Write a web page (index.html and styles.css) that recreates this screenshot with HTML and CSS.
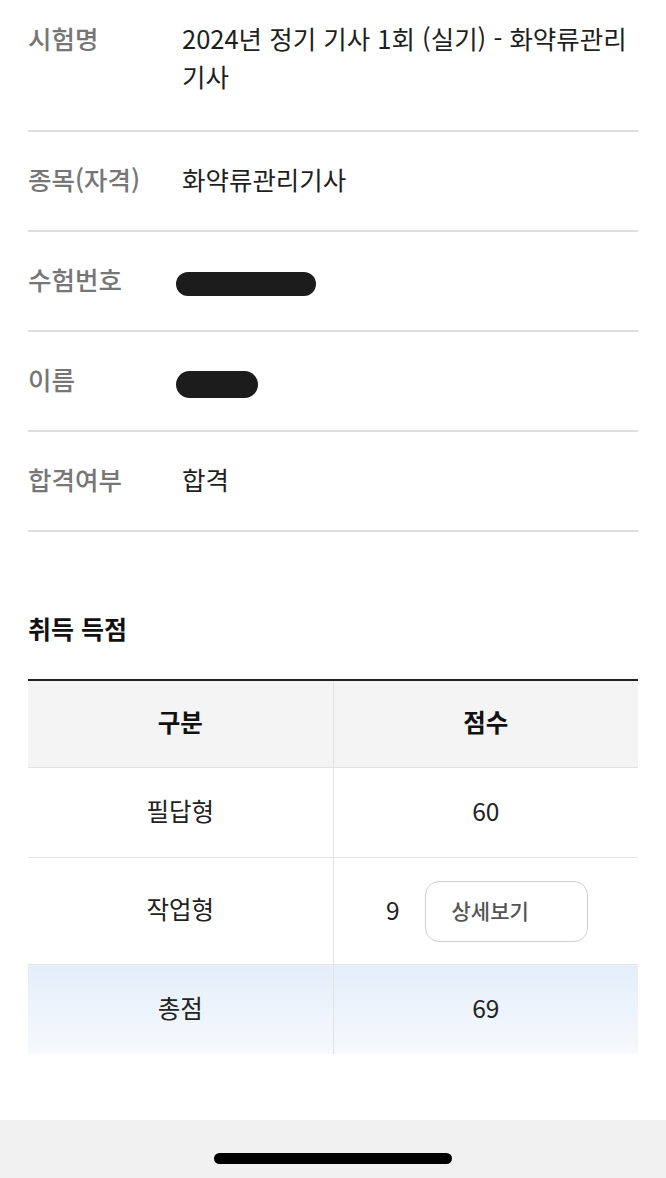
FILE: index.html
```html
<!DOCTYPE html>
<html lang="ko">
  <head>
    <meta charset="UTF-8" />
    <meta name="viewport" content="width=device-width, initial-scale=1.0" />
    <title>합격 조회</title>
    <link rel="stylesheet" href="styles.css">
  </head>
  <body>
    <div class="page">
      <dl class="info">
        <div class="info-row">
          <dt>시험명</dt>
          <dd>2024년 정기 기사 1회 (실기) - 화약류관리기사</dd>
        </div>
        <div class="info-row">
          <dt>종목(자격)</dt>
          <dd>화약류관리기사</dd>
        </div>
        <div class="info-row">
          <dt>수험번호</dt>
          <dd><span class="masked masked-long"></span></dd>
        </div>
        <div class="info-row">
          <dt>이름</dt>
          <dd><span class="masked masked-short"></span></dd>
        </div>
        <div class="info-row">
          <dt>합격여부</dt>
          <dd>합격</dd>
        </div>
      </dl>

      <h2 class="section-title">취득 득점</h2>

      <table class="score">
        <thead>
          <tr>
            <th>구분</th>
            <th>점수</th>
          </tr>
        </thead>
        <tbody>
          <tr>
            <td>필답형</td>
            <td>60</td>
          </tr>
          <tr class="work-row">
            <td>작업형</td>
            <td class="detail-cell">
              <div class="score-detail">
                <span>9</span>
                <button class="detail-btn">상세보기</button>
              </div>
            </td>
          </tr>
          <tr class="total">
            <td>총점</td>
            <td>69</td>
          </tr>
        </tbody>
      </table>
    </div>

    <div class="home-bar">
      <div class="home-indicator"></div>
    </div>
  </body>
</html>
```

FILE: styles.css
```css
body {
  font-family: "Noto Sans CJK KR", "Noto Sans", sans-serif;
  background: #fff;
  color: #222;
  margin: 0;
  padding: 0;
}
.page {
  padding: 0 28px;
  height: 1120px;
}
.info {
  margin: 0;
}
.info-row {
  display: flex;
  padding: 28px 0 32px;
  border-bottom: 2px solid #dedede;
  font-size: 25.5px;
  line-height: 38px;
}
.info-row:first-child {
  padding-top: 19px;
  padding-bottom: 35px;
}
.info-row dt {
  width: 154px;
  flex-shrink: 0;
  color: #767676;
  font-weight: 500;
}
.info-row dd {
  margin: 0;
  flex: 1;
  color: #1e1e1e;
}
.masked {
  display: inline-block;
  vertical-align: middle;
  background: #1c1c1c;
  border-radius: 14px;
  margin-left: -6px;
}
.masked-long {
  width: 140px;
  height: 24px;
  margin-top: 2px;
}
.masked-short {
  width: 82px;
  height: 27px;
  margin-top: 2px;
}
.section-title {
  margin: 77px 0 0;
  font-size: 25px;
  line-height: 38px;
  font-weight: bold;
  color: #111;
}
.score {
  width: 100%;
  margin-top: 32px;
  border-collapse: collapse;
  border-top: 2px solid #222;
  font-size: 24.5px;
}
.score th,
.score td {
  width: 50%;
  text-align: center;
  border-bottom: 1px solid #e2e2e2;
  padding: 0 0 5px;
  height: 84px;
}
.score th + th,
.score td + td {
  border-left: 1px solid #e2e2e2;
}
.score th {
  background: #f4f4f4;
  font-weight: bold;
  color: #111;
  height: 81px;
}
.score td {
  color: #222;
}
.work-row td {
  height: 101px;
}
.work-row .detail-cell {
  padding: 0;
}
.score-detail {
  display: flex;
  align-items: center;
  justify-content: center;
  gap: 25px;
  padding-left: 2px;
}
.detail-btn {
  width: 163px;
  height: 61px;
  padding: 0 0 3px 26px;
  text-align: left;
  background: #fff;
  border: 1px solid #cfcfcf;
  border-radius: 14px;
  font-family: inherit;
  font-size: 21px;
  font-weight: 500;
  color: #555;
  cursor: pointer;
}
.score-detail span {
  padding-bottom: 4px;
}
.total td {
  background: linear-gradient(#e4eef9, #f6f9fd);
  border-bottom: none;
}
.home-bar {
  background: #f1f1f1;
  height: 58px;
  display: flex;
  justify-content: center;
  padding-top: 33px;
  box-sizing: border-box;
}
.home-indicator {
  width: 238px;
  height: 11px;
  background: #000;
  border-radius: 6px;
}
```
